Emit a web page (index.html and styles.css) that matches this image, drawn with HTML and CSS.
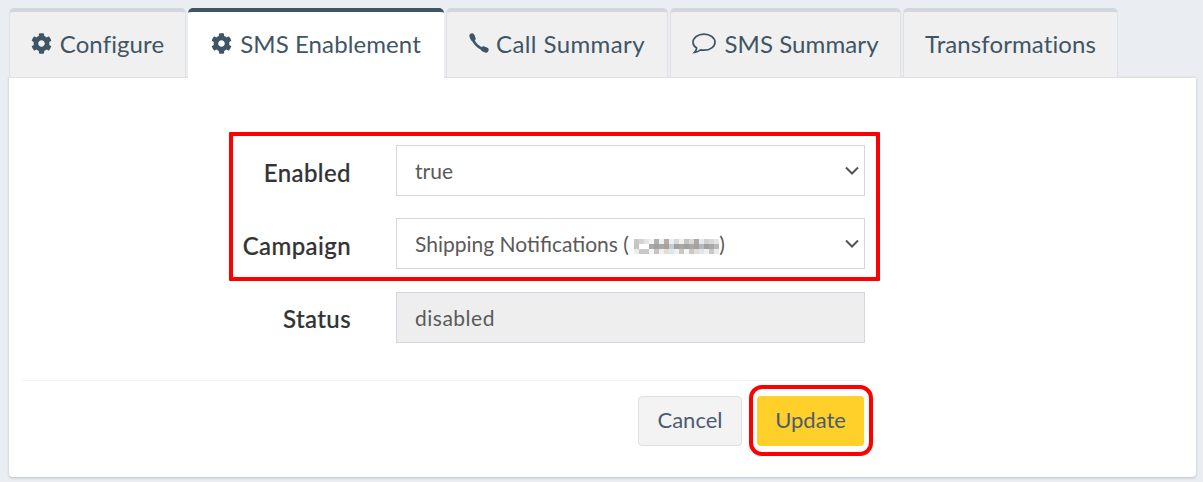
FILE: index.html
```html
<!DOCTYPE html>
<html lang="en">
<head>
  <meta charset="UTF-8" />
  <title>SMS Enablement</title>
  <link rel="stylesheet" href="styles.css">
</head>
<body>

  <!-- Tabs -->
  <ul class="tabs">
    <li class="tab">
      <svg class="icon" viewBox="0 0 512 512"><path d="M487.4 315.7l-42.6-24.6c4.3-23.2 4.3-47 0-70.2l42.6-24.6c4.9-2.8 7.1-8.6 5.5-14-11.1-35.6-30-67.8-54.7-94.6-3.8-4.1-10-5.1-14.8-2.3L380.8 110c-17.9-15.4-38.5-27.3-60.8-35.1V25.8c0-5.6-3.9-10.5-9.4-11.7-36.7-8.2-74.3-7.8-109.2 0-5.5 1.2-9.4 6.1-9.4 11.7V75c-22.2 7.9-42.8 19.8-60.8 35.1L88.7 85.5c-4.9-2.8-11-1.9-14.8 2.3-24.7 26.7-43.6 58.9-54.7 94.6-1.7 5.4.6 11.2 5.5 14L67.3 221c-4.3 23.2-4.3 47 0 70.2l-42.6 24.6c-4.9 2.8-7.1 8.6-5.5 14 11.1 35.6 30 67.8 54.7 94.6 3.8 4.1 10 5.1 14.8 2.3l42.6-24.6c17.9 15.4 38.5 27.3 60.8 35.1v49.2c0 5.6 3.9 10.5 9.4 11.7 36.7 8.2 74.3 7.8 109.2 0 5.5-1.2 9.4-6.1 9.4-11.7v-49.2c22.2-7.9 42.8-19.8 60.8-35.1l42.6 24.6c4.9 2.8 11 1.9 14.8-2.3 24.7-26.7 43.6-58.9 54.7-94.6 1.5-5.5-.7-11.3-5.6-14.1zM256 336c-44.1 0-80-35.9-80-80s35.9-80 80-80 80 35.9 80 80-35.9 80-80 80z"/></svg>
      Configure
    </li>
    <li class="tab active">
      <svg class="icon" viewBox="0 0 512 512"><path d="M487.4 315.7l-42.6-24.6c4.3-23.2 4.3-47 0-70.2l42.6-24.6c4.9-2.8 7.1-8.6 5.5-14-11.1-35.6-30-67.8-54.7-94.6-3.8-4.1-10-5.1-14.8-2.3L380.8 110c-17.9-15.4-38.5-27.3-60.8-35.1V25.8c0-5.6-3.9-10.5-9.4-11.7-36.7-8.2-74.3-7.8-109.2 0-5.5 1.2-9.4 6.1-9.4 11.7V75c-22.2 7.9-42.8 19.8-60.8 35.1L88.7 85.5c-4.9-2.8-11-1.9-14.8 2.3-24.7 26.7-43.6 58.9-54.7 94.6-1.7 5.4.6 11.2 5.5 14L67.3 221c-4.3 23.2-4.3 47 0 70.2l-42.6 24.6c-4.9 2.8-7.1 8.6-5.5 14 11.1 35.6 30 67.8 54.7 94.6 3.8 4.1 10 5.1 14.8 2.3l42.6-24.6c17.9 15.4 38.5 27.3 60.8 35.1v49.2c0 5.6 3.9 10.5 9.4 11.7 36.7 8.2 74.3 7.8 109.2 0 5.5-1.2 9.4-6.1 9.4-11.7v-49.2c22.2-7.9 42.8-19.8 60.8-35.1l42.6 24.6c4.9 2.8 11 1.9 14.8-2.3 24.7-26.7 43.6-58.9 54.7-94.6 1.5-5.5-.7-11.3-5.6-14.1zM256 336c-44.1 0-80-35.9-80-80s35.9-80 80-80 80 35.9 80 80-35.9 80-80 80z"/></svg>
      SMS Enablement
    </li>
    <li class="tab">
      <svg class="icon icon-phone" viewBox="0 0 20 20">
        <path class="line" stroke-width="2.6" d="M3 3C3.5 9.5 9.5 15.5 17 17"/>
        <path class="line" stroke-width="5.2" d="M3 3L4 5.5M14.5 16L17 17"/>
      </svg>
      Call Summary
    </li>
    <li class="tab">
      <svg class="icon icon-comment" viewBox="0 0 24 20" preserveAspectRatio="none">
        <path class="line" stroke-width="1.7" d="M12 1C5.9 1 1 4.4 1 8.7c0 2.3 1.5 4.3 3.7 5.7-.3 1.6-1.2 3-2.2 4.1 2.3-.2 4.4-1.2 6-2.4 1.1.2 2.3.3 3.5.3 6.1 0 11-3.4 11-7.7S18.1 1 12 1z"/>
      </svg>
      SMS Summary
    </li>
    <li class="tab">Transformations</li>
  </ul>

  <!-- Panel -->
  <div class="panel">
    <form class="form">
      <div class="form-row">
        <label class="form-label">Enabled</label>
        <div class="control select"><span>true</span></div>
      </div>
      <div class="form-row">
        <label class="form-label">Campaign</label>
        <div class="control select">
          <span>Shipping Notifications ( <svg class="redacted" viewBox="0 0 17 3" shape-rendering="crispEdges">
            <rect x="0" y="0" width="1" height="1" fill="#c8c8c8"/><rect x="1" y="0" width="1" height="1" fill="#d4d4d4"/><rect x="2" y="0" width="1" height="1" fill="#e8e4e0"/><rect x="3" y="0" width="1" height="1" fill="#f4f4f4"/><rect x="4" y="0" width="1" height="1" fill="#a8b0b8"/><rect x="5" y="0" width="1" height="1" fill="#eeeeee"/><rect x="6" y="0" width="1" height="1" fill="#b4aca4"/><rect x="7" y="0" width="1" height="1" fill="#e8eef4"/><rect x="8" y="0" width="1" height="1" fill="#d8d8d4"/><rect x="9" y="0" width="1" height="1" fill="#f0f0f0"/><rect x="10" y="0" width="1" height="1" fill="#c4c4c4"/><rect x="11" y="0" width="1" height="1" fill="#d8d8d8"/><rect x="12" y="0" width="1" height="1" fill="#b0a8a0"/><rect x="13" y="0" width="1" height="1" fill="#e0eaf2"/><rect x="14" y="0" width="1" height="1" fill="#d0d0d0"/><rect x="15" y="0" width="1" height="1" fill="#d8d8d8"/><rect x="16" y="0" width="1" height="1" fill="#e4e4e4"/>
            <rect x="0" y="1" width="1" height="1" fill="#c4c4c4"/><rect x="1" y="1" width="2" height="1" fill="#ffffff"/><rect x="3" y="1" width="1" height="1" fill="#a8a8a8"/><rect x="4" y="1" width="1" height="1" fill="#a0a0a0"/><rect x="5" y="1" width="1" height="1" fill="#a8a8a8"/><rect x="6" y="1" width="1" height="1" fill="#a4a09c"/><rect x="7" y="1" width="1" height="1" fill="#c8ccd0"/><rect x="8" y="1" width="1" height="1" fill="#a0a0a0"/><rect x="9" y="1" width="1" height="1" fill="#a8a8a8"/><rect x="10" y="1" width="1" height="1" fill="#a0a0a0"/><rect x="11" y="1" width="1" height="1" fill="#a8a8a8"/><rect x="12" y="1" width="1" height="1" fill="#a4a09c"/><rect x="13" y="1" width="1" height="1" fill="#b0b8c0"/><rect x="14" y="1" width="1" height="1" fill="#a0a0a0"/><rect x="15" y="1" width="1" height="1" fill="#a8a8a8"/><rect x="16" y="1" width="1" height="1" fill="#b8b8b8"/>
            <rect x="0" y="2" width="1" height="1" fill="#ececec"/><rect x="1" y="2" width="2" height="1" fill="#c8c8c8"/><rect x="3" y="2" width="1" height="1" fill="#f4f4f4"/><rect x="4" y="2" width="1" height="1" fill="#c4c4c4"/><rect x="5" y="2" width="1" height="1" fill="#f0f0f0"/><rect x="6" y="2" width="1" height="1" fill="#e8dcd0"/><rect x="7" y="2" width="1" height="1" fill="#dce8f0"/><rect x="8" y="2" width="1" height="1" fill="#f0f0f0"/><rect x="9" y="2" width="1" height="1" fill="#c8c8c8"/><rect x="10" y="2" width="1" height="1" fill="#f4f4f4"/><rect x="11" y="2" width="1" height="1" fill="#c8c8c8"/><rect x="12" y="2" width="1" height="1" fill="#e8dcd0"/><rect x="13" y="2" width="1" height="1" fill="#dce8f0"/><rect x="14" y="2" width="1" height="1" fill="#f0f0f0"/><rect x="15" y="2" width="1" height="1" fill="#c8c8c8"/><rect x="16" y="2" width="1" height="1" fill="#ececec"/>
          </svg>)</span>
        </div>
      </div>
      <div class="form-row">
        <label class="form-label">Status</label>
        <div class="control readonly"><span>disabled</span></div>
      </div>
      <div class="highlight highlight-fields"></div>
    </form>

    <div class="panel-footer">
      <button class="btn btn-cancel" type="button">Cancel</button>
      <span class="update-wrap">
        <button class="btn btn-update" type="button">Update</button>
        <span class="highlight highlight-update"></span>
      </span>
    </div>
  </div>

</body>
</html>
```

FILE: styles.css
```css
/* General Styles */
body {
  margin: 0;
  padding: 8px 7px 6px 9px;
  background: #eaeef3;
  font-family: Lato, "Open Sans", sans-serif;
  color: #3f5566;
}

/* Tabs */
.tabs {
  list-style: none;
  display: flex;
  gap: 2px;
  margin: 0;
  padding: 0;
  height: 69px;
}
.tab {
  display: flex;
  align-items: center;
  justify-content: center;
  box-sizing: border-box;
  height: 70px;
  background: #f0f0f0;
  border: 1px solid #dfe1e3;
  border-top: 4px solid #d2d6e0;
  border-radius: 5px 5px 0 0;
  font-size: 24px;
  letter-spacing: 0.1px;
  padding: 0 0 3px;
  white-space: nowrap;
}
.tab:nth-child(1) { width: 177px; }
.tab:nth-child(2) { width: 256px; }
.tab:nth-child(3) { width: 222px; letter-spacing: 0.4px; }
.tab:nth-child(4) { width: 231px; }
.tab:nth-child(5) { width: 215px; }
.tab.active {
  background: #fff;
  border-top-color: #3f5566;
  border-left: 0;
  border-right: 0;
  border-bottom: 0;
  position: relative;
  z-index: 1;
}
.icon {
  width: 21px;
  height: 21px;
  fill: #3f5566;
  margin-right: 8px;
  flex-shrink: 0;
}
.icon-phone {
  width: 20px;
  height: 20px;
  margin-right: 7px;
}
.icon-comment {
  width: 24px;
  height: 21px;
}
.line {
  fill: none;
  stroke: #3f5566;
  stroke-linecap: round;
}

/* Panel */
.panel {
  background: #fff;
  height: 399px;
  border-radius: 0 0 4px 4px;
  box-shadow: 0 1px 3px rgba(0, 0, 0, 0.2);
  border-top: 1px solid #dfe1e3;
  padding: 0 14px;
}
.form {
  position: relative;
  width: 652px;
  margin: 0 0 0 206px;
  padding-top: 67px;
  display: flex;
  flex-direction: column;
  gap: 22.4px;
}
.form-row {
  display: flex;
  align-items: center;
}
.form-label {
  width: 122px;
  margin-right: 45px;
  padding-top: 3px;
  text-align: right;
  font-size: 24px;
  letter-spacing: 0.4px;
  font-weight: 500;
  color: #333;
  -webkit-text-stroke: 0.2px #333;
}
.control {
  box-sizing: border-box;
  width: 469px;
  height: 51px;
  border: 1px solid #d2d6e0;
  padding: 0 18px;
  display: flex;
  align-items: center;
  font-size: 21px;
  color: #5a5a5a;
  white-space: nowrap;
}
.select {
  background: #fff url("data:image/svg+xml,%3Csvg xmlns='http://www.w3.org/2000/svg' viewBox='0 0 14 9'%3E%3Cpath d='M1 1.5l6 6 6-6' fill='none' stroke='%23555' stroke-width='2'/%3E%3C/svg%3E") no-repeat right 5px center / 14px 9px;
}
.readonly {
  background: #eeeeee;
  letter-spacing: 0.5px;
}
.redacted {
  width: 85px;
  height: 15px;
  vertical-align: -2px;
}

/* Red annotation boxes */
.highlight {
  position: absolute;
  box-sizing: border-box;
  border: 4px solid #f00;
}
.highlight-fields {
  left: 0;
  top: 54px;
  width: 651px;
  height: 149px;
  border-radius: 1px;
}
.highlight-update {
  left: -8px;
  right: -9px;
  top: -11px;
  bottom: -10px;
  border-radius: 13px;
}

/* Footer */
.panel-footer {
  display: flex;
  justify-content: flex-end;
  align-items: center;
  gap: 15px;
  width: 841px;
  margin-top: 37px;
  padding-top: 15px;
  border-top: 1px solid #f0f0f0;
}
.btn {
  height: 50px;
  border-radius: 4px;
  padding: 0 0 2px;
  font-family: inherit;
  font-size: 22px;
  color: #4d5b70;
  box-sizing: border-box;
}
.btn-cancel {
  width: 104px;
  background: #f3f3f3;
  border: 1px solid #e0e0e0;
}
.btn-update {
  width: 107px;
  background: #ffd02a;
  border: 0;
}
.update-wrap {
  position: relative;
  display: flex;
}
```
